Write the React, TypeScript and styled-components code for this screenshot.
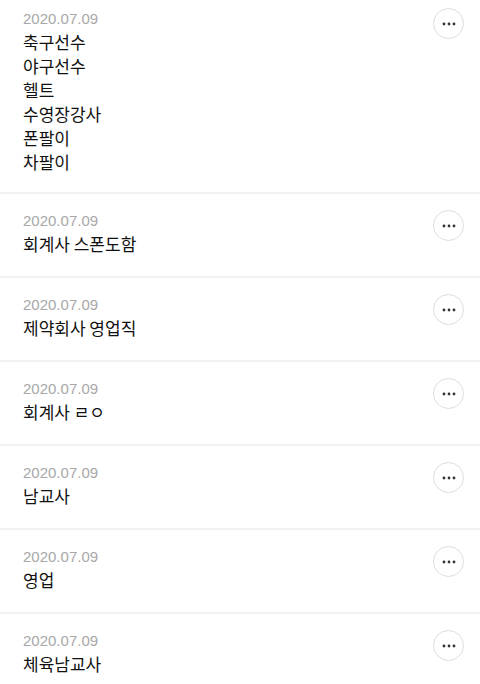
import React from "react";
import styled, { createGlobalStyle } from "styled-components";

const GlobalStyle = createGlobalStyle`
  html, body {
    margin: 0;
    padding: 0;
    background: #ffffff;
    overflow: hidden;
  }
  body {
    font-family: "Noto Sans CJK KR", "Noto Sans", sans-serif;
    -webkit-font-smoothing: antialiased;
  }
  * { box-sizing: border-box; }
`;

const Page = styled.div`
  width: 480px;
  height: 684px;
  overflow: hidden;
  background: #fff;
`;

const List = styled.ul`
  list-style: none;
  margin: -8px 0 0 0;
  padding: 0;
`;

const Item = styled.li`
  display: flex;
  align-items: flex-start;
  justify-content: space-between;
  padding: 16px 16px 20px 23px;
  border-bottom: 2px solid #f1f1f1;

  &:first-child {
    padding-bottom: 18px;
  }
`;

const Body = styled.div`
  display: flex;
  flex-direction: column;
  min-width: 0;
`;

const DateText = styled.div`
  font-family: "Liberation Sans", Arial, sans-serif;
  font-size: 15px;
  line-height: 22px;
  color: #a8a8a8;
`;

const Content = styled.div`
  font-family: "Noto Sans CJK KR", "Noto Sans", sans-serif;
  font-size: 17px;
  line-height: 24px;
  color: #111;
  white-space: pre-line;
`;

const MoreButton = styled.button`
  flex: none;
  width: 31px;
  height: 31px;
  margin-top: 0;
  border-radius: 50%;
  border: 1px solid #dedede;
  background: #fff;
  display: flex;
  align-items: center;
  justify-content: center;
  padding: 0;
  cursor: pointer;
`;

const Dots = () => (
  <svg width="14" height="4" viewBox="0 0 14 4" aria-hidden="true">
    <circle cx="2" cy="2" r="1.4" fill="#333" />
    <circle cx="7" cy="2" r="1.4" fill="#333" />
    <circle cx="12" cy="2" r="1.4" fill="#333" />
  </svg>
);

const items = [
  { date: "2020.07.09", text: "축구선수\n야구선수\n헬트\n수영장강사\n폰팔이\n차팔이" },
  { date: "2020.07.09", text: "회계사 스폰도함" },
  { date: "2020.07.09", text: "제약회사 영업직" },
  { date: "2020.07.09", text: "회계사 ㄹㅇ" },
  { date: "2020.07.09", text: "남교사" },
  { date: "2020.07.09", text: "영업" },
  { date: "2020.07.09", text: "체육남교사" },
];

export default function App() {
  return (
    <>
      <GlobalStyle />
      <Page>
        <List>
          {items.map((it, i) => (
            <Item key={i}>
              <Body>
                <DateText>{it.date}</DateText>
                <Content>{it.text}</Content>
              </Body>
              <MoreButton aria-label="더보기">
                <Dots />
              </MoreButton>
            </Item>
          ))}
        </List>
      </Page>
    </>
  );
}
